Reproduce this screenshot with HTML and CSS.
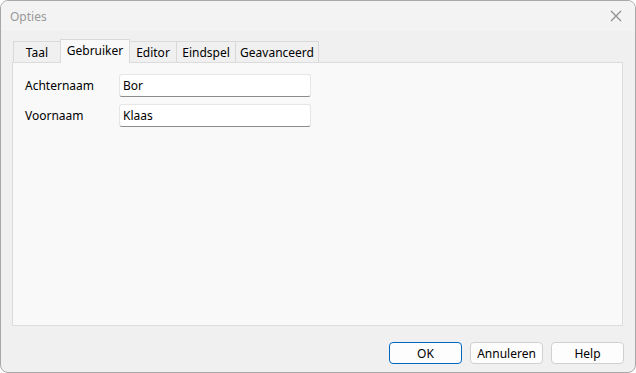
FILE: index.html
```html
<!DOCTYPE html>
<html>
<head>
<meta charset="utf-8">
<link rel="stylesheet" href="styles.css">
</head>
<body>
<div class="window">
  <div class="titlebar">
    <span class="title">Opties</span>
    <svg class="close" width="12" height="12" viewBox="0 0 12 12"><path d="M1 1L11 11M11 1L1 11" stroke="#8a8a8a" stroke-width="1.1" fill="none"/></svg>
  </div>
  <div class="body">
    <div class="tabs">
      <div class="tab t-taal">Taal</div>
      <div class="tab active t-geb">Gebruiker</div>
      <div class="tab t-ed">Editor</div>
      <div class="tab t-eind">Eindspel</div>
      <div class="tab t-gea">Geavanceerd</div>
    </div>
    <div class="panel">
      <div class="row">
        <label class="label">Achternaam</label>
        <div class="input">Bor</div>
      </div>
      <div class="row">
        <label class="label">Voornaam</label>
        <div class="input">Klaas</div>
      </div>
    </div>
    <div class="footer">
      <button class="btn default">OK</button>
      <button class="btn">Annuleren</button>
      <button class="btn">Help</button>
    </div>
  </div>
</div>
</body>
</html>
```
FILE: styles.css
```css
html, body {
  margin: 0;
  padding: 0;
  background: #ffffff;
}
body {
  font-family: "Noto Sans", "DejaVu Sans", sans-serif;
  font-size: 12px;
  color: #000;
}
.window {
  box-sizing: border-box;
  width: 636px;
  height: 373px;
  border: 1px solid #a8a8a8;
  border-radius: 8px;
  background: #f0f0f0;
  overflow: hidden;
  display: flex;
  flex-direction: column;
}
.titlebar {
  height: 30px;
  background: #f3f3f3;
  display: flex;
  align-items: center;
  justify-content: space-between;
  padding: 0 10px 0 9px;
  flex: none;
}
.title {
  color: #9a9a9a;
  font-size: 12px;
  margin-top: 1px;
}
.close {
  display: block;
  margin-right: 3px;
}
.body {
  flex: 1;
  display: flex;
  flex-direction: column;
  padding: 0 0 0 11px;
}
.tabs {
  display: flex;
  margin-top: 10px;
  margin-left: 1px;
  height: 21px;
  align-items: flex-end;
  position: relative;
  z-index: 1;
}
.tab {
  box-sizing: border-box;
  height: 21px;
  border: 1px solid #d9d9d9;
  border-bottom: none;
  background: #f0f0f0;
  display: flex;
  align-items: center;
  justify-content: center;
  margin-left: -1px;
  padding-top: 1px;
}
.tab:first-child { margin-left: 0; }
.t-taal { width: 48px; }
.t-geb { width: 70px; }
.t-ed { width: 48px; }
.t-eind { width: 60px; }
.t-gea { width: 84px; }
.tab.active {
  height: 24px;
  background: #f9f9f9;
  border-color: #d9d9d9;
  margin-bottom: -1px;
  padding-top: 0;
  padding-bottom: 3px;
  z-index: 2;
}
.panel {
  box-sizing: border-box;
  width: 611px;
  height: 264px;
  background: #f9f9f9;
  border: 1px solid #dcdcdc;
  padding: 11px 0 0 12px;
  display: flex;
  flex-direction: column;
  gap: 7px;
}
.row {
  display: flex;
  align-items: center;
}
.label {
  width: 94px;
  flex: none;
}
.input {
  box-sizing: border-box;
  width: 192px;
  height: 23px;
  background: #fff;
  border: 1px solid #e6e6e6;
  border-bottom: 1px solid #8c8c8c;
  border-radius: 3px;
  padding: 0 3px;
  display: flex;
  align-items: center;
}
.footer {
  display: flex;
  justify-content: flex-end;
  gap: 8px;
  margin-top: 16px;
  padding-right: 11px;
}
.btn {
  box-sizing: border-box;
  width: 73px;
  height: 22px;
  font: inherit;
  color: #000;
  background: #fdfdfd;
  border: 1px solid #d0d0d0;
  border-radius: 4px;
  padding: 0;
}
.btn.default {
  border-color: #0067c0;
}
```
